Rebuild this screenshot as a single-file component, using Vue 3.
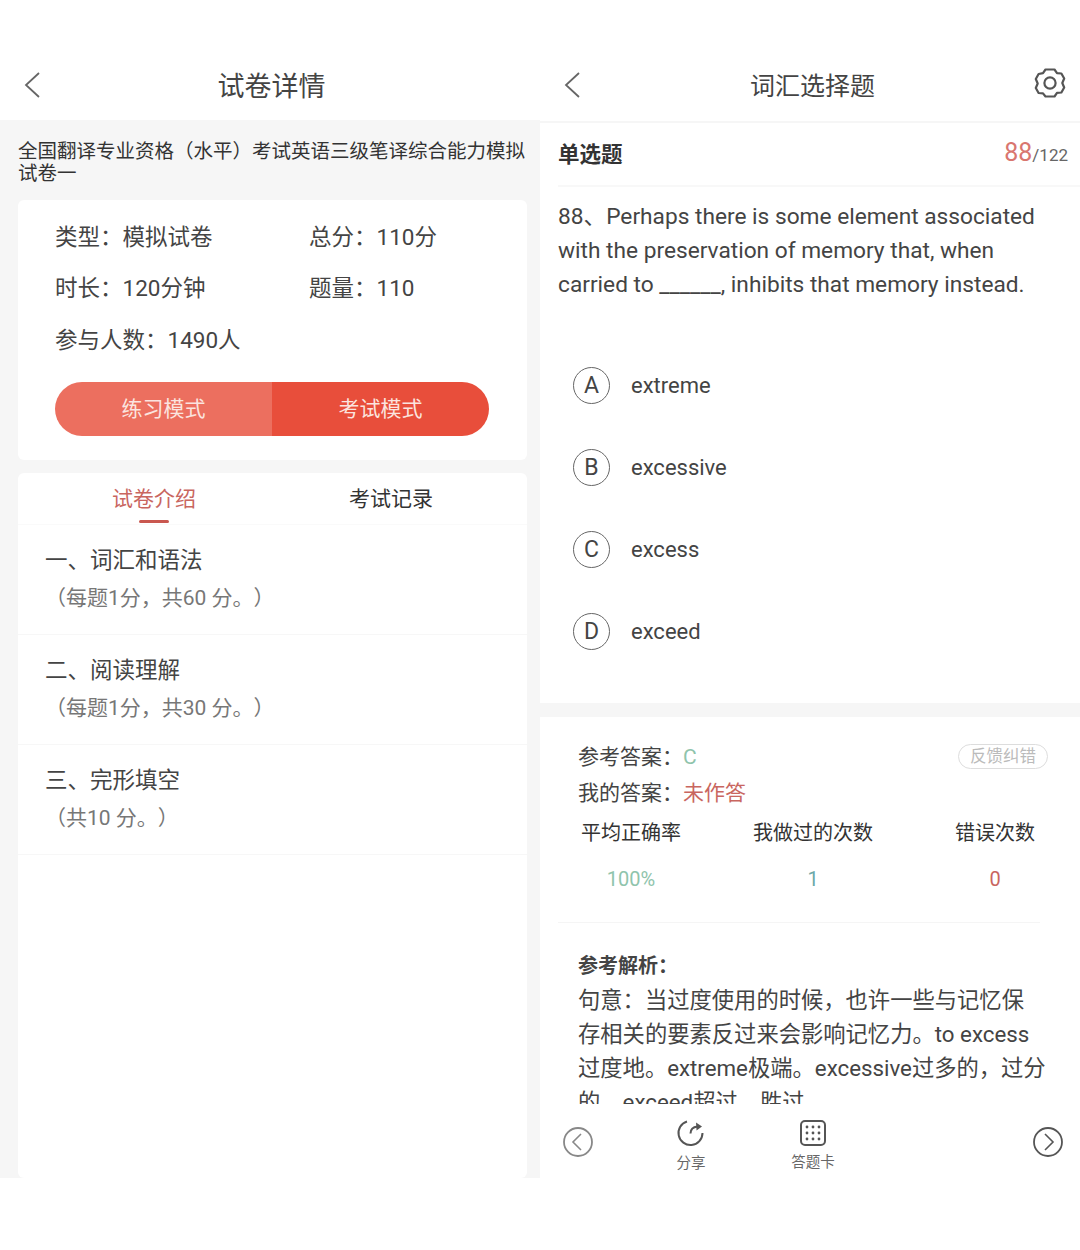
<template>
  <div class="page">
    <section class="phone left">
      <header class="nav">
        <svg class="back" width="18" height="28" viewBox="0 0 18 28"><polyline points="15,2 2,14 15,26" /></svg>
        <h1 class="nav-title paper-title">试卷详情</h1>
      </header>
      <div class="paper-body">
        <p class="paper-name">全国翻译专业资格（水平）考试英语三级笔译综合能力模拟试卷一</p>
        <div class="card info-card">
          <div class="info-grid">
            <span v-for="item in infoItems" :key="item.label" class="info-item">{{ item.label }}：{{ item.value }}</span>
          </div>
          <div class="mode-btn">
            <span class="mode practice">练习模式</span>
            <span class="mode exam">考试模式</span>
          </div>
        </div>
        <div class="card intro-card">
          <div class="tabs">
            <span class="tab active">试卷介绍</span>
            <span class="tab">考试记录</span>
          </div>
          <div v-for="part in parts" :key="part.title" class="part">
            <div class="part-title">{{ part.title }}</div>
            <div class="part-sub">{{ part.sub }}</div>
          </div>
        </div>
      </div>
    </section>

    <section class="phone right">
      <header class="nav nav-line">
        <svg class="back" width="18" height="28" viewBox="0 0 18 28"><polyline points="15,2 2,14 15,26" /></svg>
        <h1 class="nav-title">词汇选择题</h1>
        <svg class="gear" width="32" height="32" viewBox="0 0 32 32">
          <path d="M11.500 2.500h9l2.500 3.600 4.400.4 2.800 5-1.900 4.500 1.900 4.500-2.800 5-4.400.4-2.500 3.600h-9L9 26.400l-4.400-.4-2.800-5 1.900-4.500-1.900-4.500 2.800-5L9 6.100z" />
          <circle cx="16" cy="16" r="5.600" />
        </svg>
      </header>
      <div class="question-panel">
        <div class="q-head">
          <span class="q-type">单选题</span>
          <span class="q-count"><em>88</em>/122</span>
        </div>
        <p class="q-text">88、Perhaps there is some element associated with the preservation of memory that, when carried to ______, inhibits that memory instead.</p>
        <div class="options">
          <div v-for="opt in options" :key="opt.key" class="option">
            <span class="opt-key">{{ opt.key }}</span>
            <span class="opt-text">{{ opt.text }}</span>
          </div>
        </div>
      </div>
      <div class="answer-panel">
        <div class="answer-top">
          <div>
            <div class="answer-row">参考答案：<span class="green">C</span></div>
            <div class="answer-row">我的答案：<span class="red">未作答</span></div>
          </div>
          <span class="feedback">反馈纠错</span>
        </div>
        <div class="stats">
          <div v-for="stat in stats" :key="stat.label" class="stat">
            <div class="stat-label">{{ stat.label }}</div>
            <div class="stat-value" :class="stat.tone">{{ stat.value }}</div>
          </div>
        </div>
        <div class="divider"></div>
        <div class="analysis">
          <div class="analysis-title">参考解析：</div>
          <p class="analysis-text">句意：当过度使用的时候，也许一些与记忆保存相关的要素反过来会影响记忆力。to excess 过度地。extreme极端。excessive过多的，过分的。exceed超过，胜过。</p>
        </div>
        <footer class="toolbar">
          <svg class="round-btn" width="32" height="32" viewBox="0 0 32 32"><circle cx="16" cy="16" r="14" /><polyline points="19,8 11,16 19,24" /></svg>
          <div class="tool tool-share">
            <svg width="30" height="30" viewBox="0 0 30 30">
              <path d="M11 3.500a12 12 0 1 0 15.500 11.500" />
              <path d="M14.500 15.500c0-4 2.500-6.500 7-7" />
              <path class="fill" d="M20 4.500l6 4-5.500 4z" />
            </svg>
            <span>分享</span>
          </div>
          <div class="tool tool-card">
            <svg width="28" height="28" viewBox="0 0 28 28">
              <rect x="2" y="2" width="24" height="24" rx="4" />
              <circle v-for="d in dots" :key="d.id" class="fill" :cx="d.x" :cy="d.y" r="1.400" />
            </svg>
            <span>答题卡</span>
          </div>
          <svg class="round-btn dark" width="32" height="32" viewBox="0 0 32 32"><circle cx="16" cy="16" r="14" /><polyline points="13,8 21,16 13,24" /></svg>
        </footer>
      </div>
    </section>
  </div>
</template>

<script setup>
const infoItems = [
  { label: '类型', value: '模拟试卷' },
  { label: '总分', value: '110分' },
  { label: '时长', value: '120分钟' },
  { label: '题量', value: '110' },
  { label: '参与人数', value: '1490人' }
]

const parts = [
  { title: '一、词汇和语法', sub: '（每题1分，共60 分。）' },
  { title: '二、阅读理解', sub: '（每题1分，共30 分。）' },
  { title: '三、完形填空', sub: '（共10 分。）' }
]

const options = [
  { key: 'A', text: 'extreme' },
  { key: 'B', text: 'excessive' },
  { key: 'C', text: 'excess' },
  { key: 'D', text: 'exceed' }
]

const stats = [
  { label: '平均正确率', value: '100%', tone: 'green' },
  { label: '我做过的次数', value: '1', tone: 'teal' },
  { label: '错误次数', value: '0', tone: 'red' }
]

const dots = []
for (let row = 0; row < 3; row++) {
  for (let col = 0; col < 3; col++) {
    dots.push({ id: `${row}-${col}`, x: 8 + col * 6, y: 8 + row * 6 })
  }
}
</script>

<style>
html,
body {
  margin: 0;
  background: #fff;
}
</style>

<style scoped>
.page {
  display: flex;
  width: 1080px;
  height: 1250px;
  background: #fff;
  font-family: "Roboto", "Noto Sans CJK SC", sans-serif;
  color: #444;
  overflow: hidden;
  text-spacing-trim: space-all;
}

.phone {
  width: 540px;
  height: 1178px;
  display: flex;
  flex-direction: column;
}

.right {
  background: #f6f6f6;
}

.nav {
  position: relative;
  height: 120px;
  flex-shrink: 0;
  display: flex;
  align-items: center;
  justify-content: center;
  padding: 48px 0 0 3px;
  box-sizing: border-box;
  background: #fff;
}

.nav-line {
  height: 123px;
  border-bottom: 2px solid #f6f6f6;
  padding: 47px 0 0 5px;
}

.nav-title {
  margin: 0;
  font-size: 25px;
  font-weight: 400;
  color: #444;
}

.paper-title {
  font-size: 27px;
}

.back {
  position: absolute;
  left: 24px;
  top: 71px;
}

.back polyline {
  fill: none;
  stroke: #666;
  stroke-width: 1.8;
}

.gear {
  position: absolute;
  right: 14px;
  top: 67px;
}

.gear path,
.gear circle {
  fill: none;
  stroke: #555;
  stroke-width: 2.200;
  stroke-linejoin: round;
}

.paper-body {
  flex: 1;
  background: #f6f6f6;
  padding: 21px 13px 0 18px;
  display: flex;
  flex-direction: column;
  min-height: 0;
}

.paper-name {
  margin: 0 0 15px;
  font-size: 19.500px;
  line-height: 22px;
  color: #333;
}

.card {
  background: #fff;
  border-radius: 6px;
}

.info-card {
  height: 260px;
  padding: 9px 37px 0;
  box-sizing: border-box;
  flex-shrink: 0;
}

.info-grid {
  display: grid;
  grid-template-columns: 254px 1fr;
  grid-auto-rows: 51.500px;
  align-items: center;
  font-size: 22.500px;
  color: #444;
}

.mode-btn {
  display: flex;
  width: 434px;
  height: 54px;
  margin-top: 18px;
  border-radius: 27px;
  overflow: hidden;
  color: #fbe4df;
  font-size: 21px;
}

.mode {
  flex: 1;
  display: flex;
  align-items: center;
  justify-content: center;
  padding-bottom: 3px;
}

.practice {
  background: #ec6f5f;
}

.exam {
  background: #e84e3b;
}

.intro-card {
  flex: 1;
  margin-top: 13px;
}

.tabs {
  display: grid;
  grid-template-columns: 272px 1fr;
  height: 51px;
  border-bottom: 1px solid #fafafa;
}

.tab {
  position: relative;
  font-size: 21px;
  line-height: 52px;
  color: #333;
  padding-left: 59px;
}

.tab.active {
  padding-left: 94px;
  color: #c9665f;
}

.tab.active::after {
  content: "";
  position: absolute;
  left: 121px;
  top: 47px;
  width: 30px;
  height: 3px;
  background: #c9574f;
  border-radius: 2px;
}

.part {
  height: 110px;
  padding: 17px 0 0 27px;
  box-sizing: border-box;
  border-bottom: 1px solid #f7f7f7;
}

.part-title {
  font-size: 22.500px;
  line-height: 36px;
  color: #444;
}

.part-sub {
  margin-top: 2px;
  font-size: 21px;
  line-height: 36px;
  color: #777;
}

.question-panel {
  height: 580px;
  flex-shrink: 0;
  padding: 0 0 0 18px;
  box-sizing: border-box;
  background: #fff;
}

.q-head {
  display: flex;
  justify-content: space-between;
  align-items: center;
  height: 64px;
  padding: 0 12px 3px 0;
  box-sizing: border-box;
  border-bottom: 2px solid #f8f8f8;
}

.q-type {
  font-size: 21.500px;
  font-weight: 700;
  color: #333;
}

.q-count {
  font-size: 17px;
  color: #666;
}

.q-count em {
  font-style: normal;
  font-size: 25px;
  color: #d9766f;
}

.q-text {
  width: 490px;
  margin: 13px 0 0;
  font-size: 22.700px;
  line-height: 34px;
  color: #444;
}

.options {
  margin-top: 42px;
}

.option {
  display: flex;
  align-items: center;
  height: 82px;
  padding-left: 15px;
}

.opt-key {
  width: 35px;
  height: 35px;
  border: 1.500px solid #666;
  border-radius: 50%;
  display: flex;
  align-items: center;
  justify-content: center;
  font-size: 23px;
  color: #444;
  flex-shrink: 0;
}

.opt-text {
  margin-left: 21px;
  font-size: 22px;
  color: #444;
}

.answer-panel {
  flex: 1;
  margin-top: 14px;
  background: #fff;
  position: relative;
  display: flex;
  flex-direction: column;
  min-height: 0;
}

.answer-top {
  display: flex;
  justify-content: space-between;
  padding: 22px 32px 0 38px;
}

.answer-row {
  font-size: 21px;
  line-height: 36px;
  color: #444;
}

.green {
  color: #8fc4ac;
}

.teal {
  color: #6ca8a8;
}

.red {
  color: #c9665f;
}

.feedback {
  align-self: flex-start;
  margin-top: 5px;
  height: 23px;
  line-height: 23px;
  padding: 0 11px;
  border: 1px solid #ddd;
  border-radius: 13px;
  font-size: 16.500px;
  color: #bbb;
}

.stats {
  display: grid;
  grid-template-columns: repeat(3, 182px);
  justify-items: center;
  height: 109px;
  margin-top: 2px;
}

.stat {
  text-align: center;
}

.stat-label {
  font-size: 20px;
  line-height: 40px;
  color: #333;
}

.stat-value {
  margin-top: 6px;
  font-size: 20px;
  line-height: 40px;
}

.divider {
  height: 1px;
  margin: 0 40px 0 18px;
  background: #f5f5f5;
}

.analysis {
  padding-left: 38px;
  height: 181px;
  overflow: hidden;
}

.analysis-title {
  margin-top: 25px;
  font-size: 20px;
  font-weight: 700;
  line-height: 36px;
  color: #444;
}

.analysis-text {
  margin: -1px 0 0;
  width: 468px;
  font-size: 22.300px;
  line-height: 34px;
  color: #444;
}

.toolbar {
  flex: 1;
  position: relative;
  display: flex;
  align-items: flex-start;
  justify-content: space-between;
  padding: 22px 16px 0 22px;
}

.round-btn circle,
.round-btn polyline {
  fill: none;
  stroke: #888;
  stroke-width: 1.800;
}

.round-btn polyline {
  stroke-width: 1.600;
}

.round-btn.dark circle,
.round-btn.dark polyline {
  stroke: #555;
}

.tool {
  position: absolute;
  display: flex;
  flex-direction: column;
  align-items: center;
  gap: 3px;
  font-size: 14.500px;
  color: #666;
}

.tool-share {
  top: 14px;
  left: 120px;
  width: 62px;
}

.tool-card {
  top: 15px;
  left: 242px;
  width: 62px;
}

.tool svg path,
.tool svg rect {
  fill: none;
  stroke: #555;
  stroke-width: 2;
}

.tool svg .fill {
  fill: #555;
  stroke: none;
}
</style>
